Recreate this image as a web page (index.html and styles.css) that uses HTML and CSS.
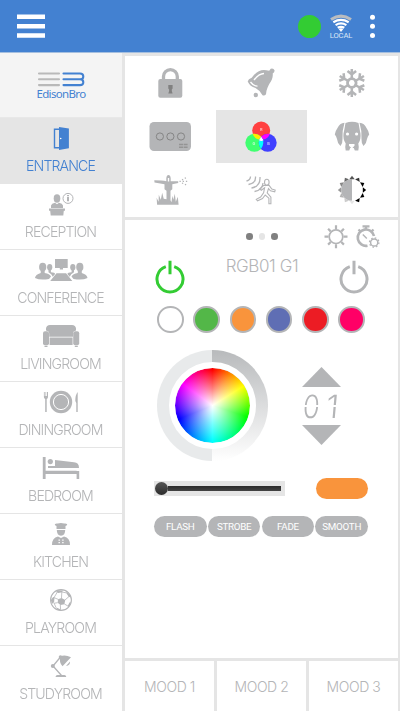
FILE: index.html
```html
<!DOCTYPE html>
<html lang="en">
<head>
<meta charset="utf-8">
<title>EdisonBro</title>
<link rel="stylesheet" href="styles.css">
</head>
<body>
<header class="topbar">
  <svg class="menu" viewBox="17 14 28 24"><path fill="#fff" d="M17 14.500h28v4.600H17zM17 24h28v4.600H17zM17 33.200h28v4.600H17z"/></svg>
  <div class="status-dot"></div>
  <div class="network">
    <svg class="wifi" viewBox="329 14 24 18" fill="none" stroke="#fff" stroke-width="2.200">
      <path stroke="#b9bcc0" stroke-width="3" d="M331 19.500Q341 12.700 351 19.500"/>
      <path d="M333.300 22.200Q341 17.600 348.700 22.200M335.600 25.100Q341 21.800 346.400 25.100M337.700 27.800Q341 25.800 344.300 27.800"/>
      <path fill="#fff" stroke="none" d="M338.700 29q2.300-1.600 4.600 0L341 32z"/>
    </svg>
    <span>LOCAL</span>
  </div>
  <svg class="more" viewBox="369 14 7 25" fill="#fff"><circle cx="372.500" cy="17.200" r="2.500"/><circle cx="372.500" cy="26.300" r="2.500"/><circle cx="372.500" cy="35.500" r="2.500"/></svg>
</header>
<div class="layout">
  <nav class="sidebar">
    <div class="brand">
      <svg viewBox="37 71 48 17" fill="none" stroke-width="2.100" stroke-linecap="round">
        <path stroke="#b9b9b9" d="M39 73.500h20M39 79.300h20M39 85.100h20"/>
        <path stroke="#4381d1" d="M63.500 73.500H80q3.300 0 3.300 2.900T80 79.300H63.500M80 79.300q3.300 0 3.300 2.900T80 85.100H63.500"/>
      </svg>
      <span>EdisonBro</span>
    </div>
    <a class="room active">
      <svg viewBox="0 118 122 38"><path fill="none" stroke="#4381d1" stroke-width="1.400" d="M60 129.200h-5.500v18.500H60"/><path fill="#4381d1" d="M59 127l9.900 1.600v19.600L59 149.900z"/><circle cx="60.700" cy="138.500" r=".8" fill="#fff"/></svg>
      <span>ENTRANCE</span>
    </a>
    <a class="room">
      <svg viewBox="0 184 122 38" fill="#b4b5b7"><ellipse cx="57" cy="198.500" rx="3.300" ry="4.200"/><path d="M51 208v-2.500q.5-2 4-2.700l2 1.500 2-1.500q3.500.7 4 2.700v2.500zM49 208.500h16v2.200h-1.200l-.5 4.800H50.700l-.5-4.800H49z"/><circle cx="68" cy="198.400" r="5" fill="#fff" stroke="#b4b5b7"/><path d="M67 197h2v4.300h-2zM67 195h2v1.300h-2z"/></svg>
      <span>RECEPTION</span>
    </a>
    <a class="room">
      <svg viewBox="0 250 122 38" fill="#b4b5b7"><path d="M55 259h12.700v9H63v1.500h-3.200V268H55zM56.500 273.300h9.600l6.200 7.700H50.200z"/><ellipse cx="42.700" cy="267" rx="3.600" ry="4.300"/><ellipse cx="49.700" cy="267.300" rx="2.600" ry="3.200"/><ellipse cx="79.800" cy="267" rx="3.600" ry="4.300"/><ellipse cx="72.800" cy="267.300" rx="2.600" ry="3.200"/><path d="M35 278q.3-3.500 5.700-5v-3h4v3q5 .6 6.300 3.500l-2 2.500q-9 1.500-14-1zM87.500 278q-.3-3.500-5.700-5v-3h-4v3q-5 .6-6.300 3.500l2 2.500q9 1.500 14-1zM48.500 272.300v-3h2.400v3q4 .3 4.200 1.700l-2.300 2.800q-1-3-4.300-4.500zM74 272.300v-3h-2.400v3q-4 .3-4.200 1.700l2.300 2.800q1-3 4.300-4.500z"/></svg>
      <span>CONFERENCE</span>
    </a>
    <a class="room">
      <svg viewBox="0 316 122 38" fill="#b4b5b7"><path d="M46 330.500v-2q.4-3.500 4-3.500h22q3.600 0 4 3.500v2q-3 .5-3 3.200v3H49.200v-3q0-2.700-3.200-3.200zM49.600 337.500h23v7.500h-23z"/><rect x="43" y="331.300" width="6" height="13.900" rx="2"/><rect x="73.200" y="331.300" width="6" height="13.900" rx="2"/><path d="M44.500 345.800h3v1.300h-3zM74.800 345.800h3v1.300h-3z"/></svg>
      <span>LIVINGROOM</span>
    </a>
    <a class="room">
      <svg viewBox="0 382 122 38" fill="#b4b5b7"><circle cx="61" cy="402" r="11.200"/><circle cx="61" cy="402" r="7.600" stroke="#fff"/><path d="M43.900 392h.8v4h.8v-4h.7v4h.8v-4h1v5q0 1.600-1.300 2v13h-1.500v-13q-1.300-.4-1.300-2zM77.700 392q-2.500 3-2.400 9l1 2v9h1.400z"/></svg>
      <span>DININGROOM</span>
    </a>
    <a class="room">
      <svg viewBox="0 448 122 38" fill="#b4b5b7"><path d="M42.800 457h2.800v13.800h31V471h2.600v8h-2.600v-5h-31v5h-2.800z"/><circle cx="50.300" cy="461.600" r="2.600"/><path d="M55 464.500v-4.400l19 2.100q5 .2 5 5.800H48v-2h7z"/></svg>
      <span>BEDROOM</span>
    </a>
    <a class="room">
      <svg viewBox="0 514 122 38" fill="#b4b5b7"><path d="M56.500 529v-3q-2-.6-1.700-1.800 1-1 3-.7 3-1 6.400 0 2-.3 3 .7.300 1.200-1.700 1.800v3zM56.800 530h8.400q0 5.400-4.200 5.800-4.200-.4-4.200-5.800zM52 545q0-7.500 6-8.500l3 1.500 3-1.500q6 1 6 8.500z"/><path fill="#fff" d="M58.500 539.500h1.400v1.300h-1.400zM62.200 539.500h1.400v1.300h-1.400zM58.500 542h1.400v1.300h-1.400zM62.200 542h1.400v1.300h-1.400z"/></svg>
      <span>KITCHEN</span>
    </a>
    <a class="room">
      <svg viewBox="0 580 122 38" fill="#b4b5b7"><circle cx="61" cy="600" r="10.400" fill="#fff" stroke="#b4b5b7" stroke-width="1.100"/><path d="M58 599.300l3.500-1.400 3.700 2-.8 4.300-4 .7-2.700-2.200zM57.500 590.200l5.500.2-1 1.800-3.500.8-2.500-.8zM66.500 591.500q4 3 4.500 6l-2.300-.7-2-3zM50.800 600l2.400-3 1.300.6-.4 4.400-1.400 1.800-1-1zM70.800 602l-1.300.5-1.800 3.500.4 1.500q2.500-2.500 2.700-5.500zM55.500 607.500l2 .4 3.300 1.600v1q-3 .2-5.300-3z"/><path fill="none" stroke="#b4b5b7" stroke-width=".8" d="M61.500 598l.3-6M65 600l4-3.500M64.400 604l3.500 2M60.300 605l.3 4.500M57.700 602.700l-3.500.5M58 599.300l-4-1.700 3-5M62 592l5 1M54 603l2 4.500"/></svg>
      <span>PLAYROOM</span>
    </a>
    <a class="room">
      <svg viewBox="0 646 122 38" fill="#b4b5b7"><path fill="none" stroke="#b4b5b7" stroke-width="1.300" d="M60.500 657L53 666l8.500 9.500"/><circle cx="52.800" cy="666" r="2"/><circle cx="60.500" cy="657" r="1.800"/><path d="M60 656.500q5-2.300 11 .8l-8.500 9q-3.500-3.500-2.500-9.800zM70 661.500q.4 4-4 4.400zM55.500 677q.2-1.900 2-1.900h6.800q1.800 0 2 1.900z"/></svg>
      <span>STUDYROOM</span>
    </a>
  </nav>
  <main class="content">
    <section class="devices">
      <div class="cell"><svg viewBox="125 56 91 54"><path fill="none" stroke="#b4b5b7" stroke-width="3.300" d="M163.500 80v-3.500a6.900 6.900 0 0 1 13.800 0V80"/><rect x="158.300" y="79" width="24" height="18.700" rx="2" fill="#b4b5b7"/><path fill="#808080" d="M168.300 85h4.300v3.500l-.8 1v1.500l.8 2.500h-4.300l.8-2.500v-1.500l-.8-1z"/></svg></div>
      <div class="cell"><svg viewBox="216 56 91 54" fill="#b4b5b7"><path d="M247.700 81.500q.5-2.500 4-3.800c6-7.700 10-8.700 17.500-7l1.500-2q2.800-.8 3.800 1.500.4 2-1.800 3.300c1 8-5.700 10-6.700 20.700q-1.500 2-3.500 1-2.500-4.800-7-7.200-5.500-1.500-7.800-6.500z"/><path fill="none" stroke="#fff" stroke-width="1.300" d="M250.500 82q3 4.200 7 4.200M254 80q5-6.500 10-6.500"/><circle cx="255.800" cy="95" r="2.200"/></svg></div>
      <div class="cell"><svg viewBox="307 56 91 54"><defs><path id="flake" d="M0-3V-14M-4.300-12L0-8.700l4.300-3.300"/></defs><g transform="translate(351.800 83)" fill="none" stroke="#b4b5b7" stroke-width="2.500"><circle r="4.300" stroke-width="2.800"/><use href="#flake"/><use href="#flake" transform="rotate(60)"/><use href="#flake" transform="rotate(120)"/><use href="#flake" transform="rotate(180)"/><use href="#flake" transform="rotate(240)"/><use href="#flake" transform="rotate(300)"/></g></svg></div>
      <div class="cell"><svg viewBox="125 110 91 53"><rect x="149.500" y="122" width="41.500" height="29" rx="4.500" fill="#b4b5b7"/><g fill="none" stroke="#858585"><circle cx="159.900" cy="136.500" r="3.600"/><circle cx="170.400" cy="136.500" r="3.600"/><circle cx="181" cy="136.500" r="3.600"/><path stroke="#949494" stroke-width="1.500" stroke-dasharray="4 .6" d="M179 144.500h9M179 147.300h9"/></g></svg></div>
      <div class="cell selected"><svg viewBox="216 110 91 53"><circle cx="261.200" cy="130.500" r="9" fill="#ff4040"/><circle cx="254.300" cy="142.800" r="9" fill="#40ff70"/><circle cx="267.700" cy="142.800" r="9" fill="#4040ff"/><path fill="#fe0" d="M252.600 133.800q5-.5 8.700 3l-2.500 2.700q-4.800-1-6.200-5.700z"/><path fill="#f0f" d="M269.800 133.800q-5-.5-8.700 3l2.500 2.700q4.800-1 6.200-5.700z"/><path fill="#0ff" d="M259 140.500h4.200q.5 5-2.200 8.300-2.800-3.300-2-8.300z"/><path fill="#fff" d="M261.200 136.800l2.300 3.500q-2.300 1.500-4.600 0z"/><g fill="#fff" opacity=".65" font-family="Roboto" font-size="4" font-weight="700" text-anchor="middle"><text x="261.200" y="131">R</text><text x="253.800" y="144.500">G</text><text x="268.500" y="144.500">B</text></g></svg></div>
      <div class="cell"><svg viewBox="307 110 91 53" fill="#b4b5b7"><path d="M345.500 123q6.500-2.500 13 0 1 6 2 10.500.7 6-2.200 10 1 4 0 7h-3.500l-1-2.500h-3.600l-1 2.500h-3.500q-1-3 0-7-2.900-4-2.200-10 1-4.500 2-10.500z"/><path id="ear" d="M344.500 122.700q-5 .5-7 5.300-2.500 3.500-2.700 6.500 1.500 1.500 2.200 4.500.3 4 3.500 7 2.300-3 2-7-.6-8 2-16.300z"/><use href="#ear" transform="matrix(-1 0 0 1 704 0)"/><g fill="#fff"><circle cx="347.500" cy="134" r="1.600"/><circle cx="356.600" cy="134" r="1.600"/><path d="M349 144h5.500v1.700l-1.900 2v2.500h-1.600v-2.500l-2-2z"/></g></svg></div>
      <div class="cell"><svg viewBox="125 163 91 54" fill="#b4b5b7"><path d="M154.300 180.300q8 0 12 1v-3q.4-3.200 2.200-3.200t2.200 3.200v3h7.500v1.800l-5.900 1.200v5l-1.800 1.500v9.500l1 2 .8-6.500 1 4 1.500-6 1 8 2-5 .8 7.900h-21.500l-.5-7 2 4 .2-7 2 5 1.400-7 1.500 6 2.800.5v-8.400l-2-1.500v-5l-10-1.800z"/><path fill="#fff" d="M167.800 178h1.400v3.500h-1.400z"/><path fill="none" stroke="#b4b5b7" stroke-width="1.200" stroke-dasharray="1.300 1.900" d="M179.500 181.300h8M182 180l5.500-3.200M182 183l5.500 2.500"/></svg></div>
      <div class="cell"><svg viewBox="216 163 91 54" fill="none" stroke="#b4b5b7" stroke-width="1.100"><path d="M246.500 181q4-1 4-4.500M248.500 184.500q7.500-1 7-8M251.500 188q9-1.500 8.500-11M254.500 191.500q8-1.500 8.500-8.500" stroke-width="1.300"/><g transform="translate(0 -1.500)"><ellipse cx="266.800" cy="183.700" rx="2.300" ry="3"/><path d="M263.500 187l-3.800 3.500 1.600 1.200 3.300-2.400-1 5-3 4.300-4.300 2.200 1.300 1.500 4.900-2.200 2.700-3.600 3.700 3.200v5.600h2v-6.700l-3.700-4.200 1.300-4.300 2 2.200 4.200 1 .5-1.800-3.400-1-2.700-3.600z"/></g></svg></div>
      <div class="cell"><svg viewBox="307 163 91 54"><defs><path id="ray" d="M-2.700-10.800L0-14.200l2.700 3.400z"/></defs><g transform="translate(352 190)"><path fill="#b4b5b7" d="M0-10.800a10.800 10.800 0 0 0 0 21.600z"/><use href="#ray" fill="#555"/><use href="#ray" fill="#333" transform="rotate(30)"/><use href="#ray" transform="rotate(60)"/><use href="#ray" transform="rotate(90)"/><use href="#ray" transform="rotate(120)"/><use href="#ray" transform="rotate(150)"/><use href="#ray" fill="#e5e5e5" transform="rotate(180)"/><use href="#ray" fill="#ccc" transform="rotate(210)"/><use href="#ray" fill="#b4b4b4" transform="rotate(240)"/><use href="#ray" fill="#999" transform="rotate(270)"/><use href="#ray" fill="#888" transform="rotate(300)"/><use href="#ray" fill="#666" transform="rotate(330)"/></g></svg></div>
    </section>
    <section class="control">
      <div class="tools">
        <span></span>
        <div class="pager"><i></i><i class="current"></i><i></i></div>
        <svg class="actions" viewBox="324 224 56 26" fill="none" stroke="#b4b5b7"><g transform="translate(336 236.700)"><circle r="6.800" stroke-width="1.700"/><path stroke-width="2.200" d="M0-7.500v-4M0 7.500v4M7.500 0h4M-7.500 0h-4M5.300-5.300l2.600-2.600M-5.300-5.300l-2.600-2.600M5.300 5.300l2.600 2.600M-5.300 5.300l-2.600 2.600"/></g><path stroke-width="2.600" d="M374 236a8.200 8.200 0 1 0-6.500 9.700"/><path stroke-width="2.300" d="M362.500 226.300h7M366 226v4M358.500 229.500l2.500 2.500M373.500 229.500l-2.500 2.500"/><path stroke-width="1.400" d="M362.800 234.500l4 4"/><circle cx="374.200" cy="242.500" r="3.600" stroke-width="1.500"/><circle cx="374.200" cy="242.500" r="4.700" stroke-width="1.300" stroke-dasharray="1.600 2.090"/></svg>
      </div>
      <div class="heading">
        <svg class="power on" viewBox="-15 -19 30 34"><path d="M-4.200-12.300a13 13 0 1 0 8.400 0M0-18.200V-4.700"/></svg>
        <h1>RGB01 G1</h1>
        <svg class="power" viewBox="-15 -19 30 34"><path d="M-4.200-12.300a13 13 0 1 0 8.400 0M0-18.200V-4.700"/></svg>
      </div>
      <div class="swatches"><i class="white"></i><i class="green"></i><i class="orange"></i><i class="blue"></i><i class="red"></i><i class="pink"></i></div>
      <div class="picker">
        <div class="ring"><div class="wheel"></div></div>
        <div class="stepper">
          <svg viewBox="0 0 39 20"><path fill="#b4b5b7" d="M0 20L19.500 0 39 20z"/></svg>
          <div class="count"><span>0</span><span>1</span></div>
          <svg viewBox="0 0 39 20"><path fill="#b4b5b7" d="M0 0h39L19.500 20z"/></svg>
        </div>
      </div>
      <div class="level">
        <div class="slider"><i class="knob"></i><i class="track"></i></div>
        <div class="preview"></div>
      </div>
      <div class="effects"><button>FLASH</button><button>STROBE</button><button>FADE</button><button>SMOOTH</button></div>
    </section>
    <footer class="moods"><div>MOOD 1</div><div>MOOD 2</div><div>MOOD 3</div></footer>
  </main>
</div>
</body>
</html>
```
FILE: styles.css
```css
* { box-sizing: border-box; }
body { margin: 0; width: 400px; height: 711px; overflow: hidden; background: #fff; font-family: Inter, "Liberation Sans", sans-serif; font-weight: 300; color: #b4b5b7; }
svg { display: block; }
.topbar { height: 53px; background: #4381d1; border-bottom: 1px solid #a5bfdf; display: flex; align-items: center; padding: 0 24px 0 17px; }
.menu { width: 28px; height: 24px; margin-right: auto; }
.status-dot { width: 23px; height: 23px; border-radius: 50%; background: #3c3; margin-right: 8px; }
.network { width: 24px; height: 25px; margin-right: 16px; display: flex; flex-direction: column; align-items: center; }
.wifi { width: 24px; height: 18px; flex: none; }
.network span { font: 400 7.6px/8px Roboto, sans-serif; letter-spacing: -.1px; color: #dce8f7; }
.more { width: 7px; height: 25px; }
.layout { display: flex; height: 658px; }
.sidebar { width: 122px; flex: none; }
.brand { height: 65px; background: #f4f4f4; border-bottom: 1px solid #e8e8e8; padding-top: 18px; display: flex; flex-direction: column; align-items: center; }
.brand svg { width: 48px; height: 17px; flex: none; }
.brand span { font: 400 11.5px/14px "Noto Sans", sans-serif; letter-spacing: -.65px; color: #4381d1; margin-top: -1px; }
.room { display: block; height: 66px; border-bottom: 1px solid #e5e5e5; text-align: center; }
.room svg { width: 122px; height: 38px; }
.room span { display: block; font-size: 15px; line-height: 19px; letter-spacing: -.9px; text-indent: -1px; transform: scaleX(.94); }
.room.active { background: #e5e5e5; color: #4381d1; }
.content { width: 278px; background: #e5e5e5; padding: 3px 2px 0 3px; display: flex; flex-direction: column; gap: 3px; }
.devices { height: 161px; flex: none; background: #fff; display: grid; grid-template: 54px 53px 54px / repeat(3, 91px); }
.cell svg { width: 91px; height: 100%; }
.cell.selected { background: #e5e5e5; }
.control { height: 438px; flex: none; background: #fff; padding: 4px 0 0 29px; }
.tools { height: 36px; width: 226px; display: grid; grid-template-columns: 92px 78px 56px; }
.pager { display: flex; gap: 6px; padding-top: 9px; }
.pager i { width: 6.5px; height: 6.5px; border-radius: 50%; background: #808080; }
.pager .current { background: #e5e5e5; }
.actions { width: 56px; height: 26px; }
.heading { width: 214px; height: 46px; margin-left: 1px; display: flex; justify-content: space-between; }
.power { width: 30px; height: 34px; fill: none; stroke: #b4b5b7; stroke-width: 3; }
.power.on { stroke: #3c3; }
h1 { margin: -4px 0 0; font-size: 17px; line-height: 20px; font-weight: 300; letter-spacing: -.4px; }
.swatches { width: 208px; margin-left: 3px; display: flex; justify-content: space-between; }
.swatches i { width: 26.5px; height: 26.5px; border-radius: 50%; border: 2px solid #b4b5b7; }
.white { background: #fff; } .green { background: #53b748; } .orange { background: #f9943c; }
.blue { background: #5f6eb4; } .red { background: #ec1c24; } .pink { background: #ff0066; }
.picker { display: flex; margin: 17px 0 0 3px; height: 111px; }
.ring { width: 111px; height: 111px; padding: 12px; border-radius: 50%; background: linear-gradient(90deg, #e8eaeb 50%, transparent 50%), linear-gradient(#b8babc, #fff); }
.wheel { width: 87px; height: 87px; border: 6.5px solid #fff; border-radius: 50%; background: radial-gradient(closest-side, #fff, rgba(255,255,255,.5) 45%, rgba(255,255,255,0) 95%) padding-box, conic-gradient(red, #ff8000 28deg, yellow 58deg, lime 108deg, cyan 180deg, blue 248deg, magenta 306deg, red) padding-box; }
.stepper { width: 39px; margin: 17px 0 0 34px; }
.stepper svg { width: 39px; height: 20px; }
.count { height: 38px; padding: 0 2px 0 1px; display: flex; justify-content: space-between; font: 300 32px/39px Inter, sans-serif; transform: skewX(-5deg); -webkit-mask: linear-gradient(#000 18.5px, transparent 18.5px 20px, #000 20px); mask: linear-gradient(#000 18.5px, transparent 18.5px 20px, #000 20px); }
.count span:first-child { transform: scaleX(.85); transform-origin: left; }
.level { width: 214px; margin: 17px 0 0; height: 21px; display: flex; align-items: center; justify-content: space-between; }
.slider { width: 131px; height: 15px; background: #e5e5e5; display: flex; align-items: center; }
.knob { width: 13px; height: 13px; margin-left: 1px; border-radius: 50%; background: linear-gradient(#555, #2c2c2c); }
.track { width: 113px; height: 5px; background: linear-gradient(#2c2c2c, #444); }
.preview { width: 52.5px; height: 21px; border-radius: 11px; background: #f9943c; }
.effects { width: 214px; margin-top: 17px; display: flex; justify-content: space-between; }
.effects button { width: 52.5px; height: 21px; padding: 0; border: 0; border-radius: 11px; background: #b4b5b7; color: #fff; font: 400 9.8px/21px Roboto, sans-serif; letter-spacing: -.3px; text-align: center; }
.moods { height: 50px; flex: none; display: grid; grid-template-columns: 89px 89px 89px; gap: 3px; }
.moods div { height: 50px; padding-top: 1px; background: #fff; text-align: center; font-size: 14px; line-height: 49px; letter-spacing: -.4px; }
```
